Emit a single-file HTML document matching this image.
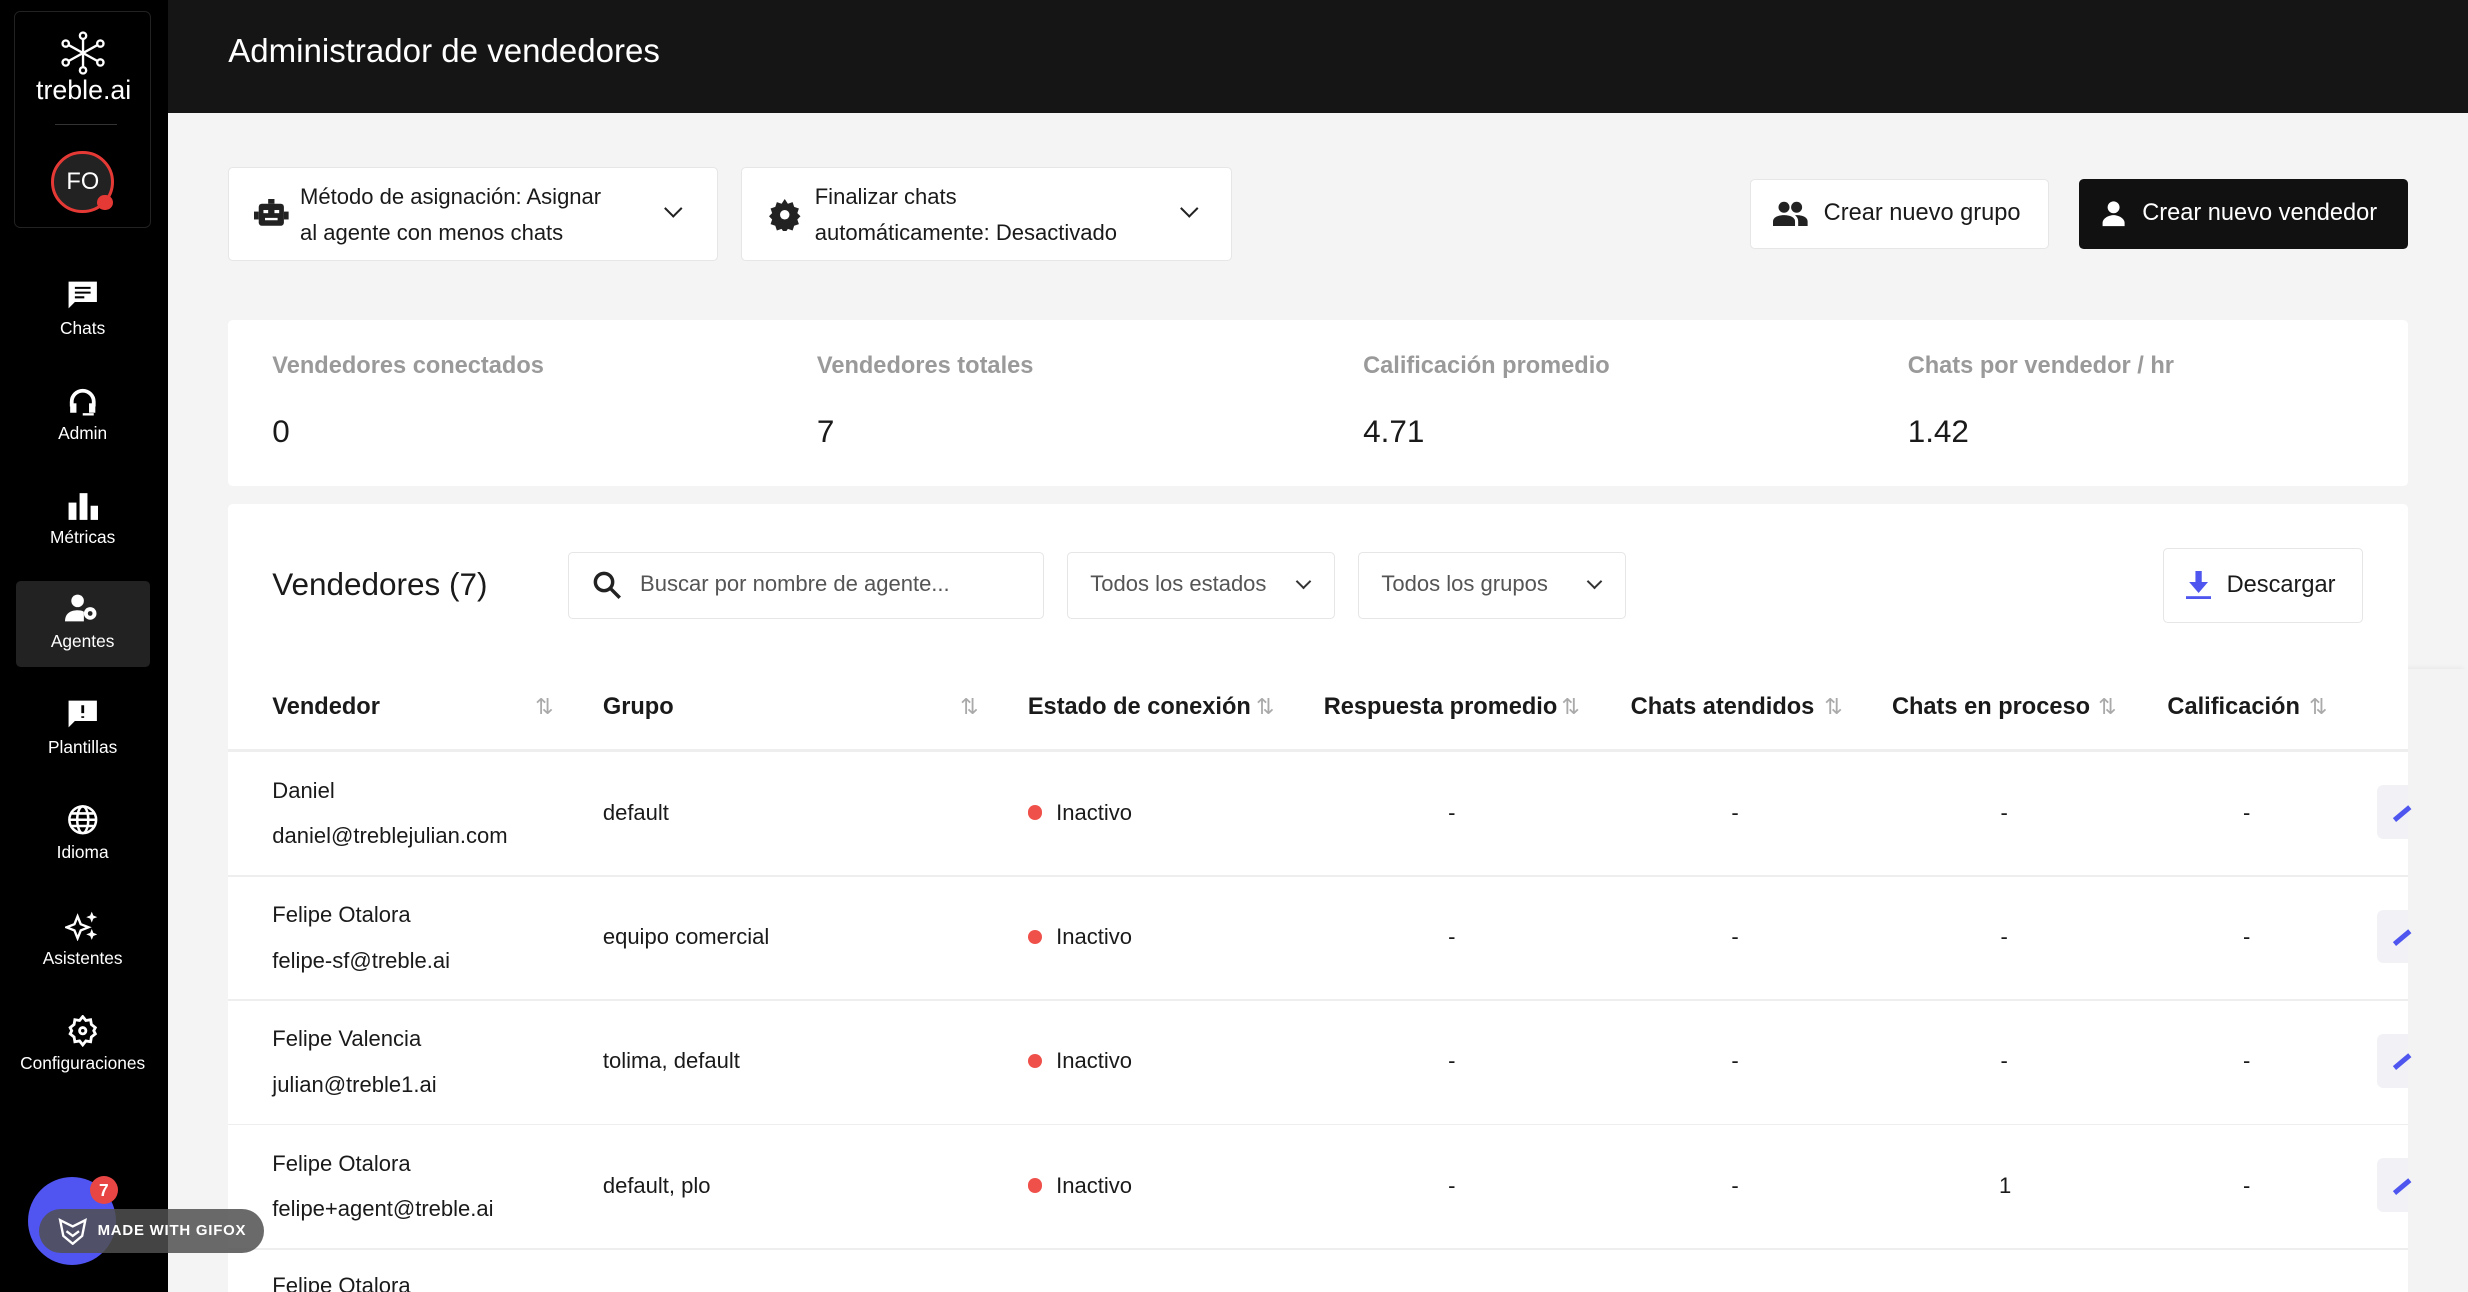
<!DOCTYPE html>
<html><head><meta charset="utf-8">
<style>
*{box-sizing:border-box;margin:0;padding:0}
html,body{width:2468px;height:1292px;overflow:hidden;background:#f4f4f4}
#w{zoom:1.574;width:1568px;height:821px;position:relative;font-family:"Liberation Sans",sans-serif;color:#1a1a1a;overflow:hidden}
.a{position:absolute}
.side{left:0;top:0;width:107px;height:821px;background:#000}
.nav{position:absolute;left:10px;width:85px;height:55px;color:#fff;font-size:11px;text-align:center;border-radius:3px}
.nav svg{display:block;margin:8px auto 4px}
.hdr{left:107px;top:0;width:1461px;height:72px;background:#151515;color:#fff;font-size:21px;padding:21px 38px}
.box{background:#fff;border:1px solid #e6e6e6;border-radius:3px}
.lbl{color:#9a9a9a;font-size:15px;font-weight:bold}
.val{font-size:20px}
.th{position:absolute;top:441px;font-size:15px;font-weight:bold}
.si{position:absolute;top:441px;color:#aaa;font-size:14px}
.cell{position:absolute;font-size:14px}
.sep{position:absolute;left:145px;width:1385px;height:1px;background:#eee}
.dot{display:inline-block;width:9px;height:9px;border-radius:50%;background:#f0504a;margin-right:9px}
.ed{position:absolute;left:1510px;width:20px;height:34px;background:#f2f2f6;border-radius:4px 0 0 4px}
.ed:after{content:"";position:absolute;left:10px;top:16px;width:13px;height:3px;background:#4f56f0;transform:rotate(-40deg)}
</style></head><body><div id="w">
<div class="a side">
 <div class="a" style="left:9px;top:7px;width:87px;height:138px;border:1px solid #222;border-radius:4px">
  <svg class="a" style="left:29px;top:12px" width="28" height="28" viewBox="0 0 28 28" fill="none" stroke="#fff" stroke-width="1.5"><circle cx="14" cy="3" r="2"/><circle cx="14" cy="25" r="2"/><circle cx="3" cy="8" r="2"/><circle cx="25" cy="8" r="2"/><circle cx="3" cy="20" r="2"/><circle cx="25" cy="20" r="2"/><path d="M14 5V23M5 9L23 19M5 19L23 9"/></svg>
  <div class="a" style="left:0;width:87px;top:40px;text-align:center;color:#fff;font-size:17px">treble.ai</div>
  <div class="a" style="left:25px;top:71px;width:40px;height:1px;background:#333"></div>
  <div class="a" style="left:23px;top:88px;width:40px;height:40px;border-radius:50%;border:2px solid #e53935;background:#222;color:#fff;font-size:15px;text-align:center;line-height:36px">FO</div>
  <div class="a" style="left:52px;top:116px;width:10px;height:10px;border-radius:50%;background:#e53935"></div>
 </div>
 <div class="nav" style="top:170px"><svg width="20" height="20" viewBox="0 0 20 20"><path d="M1 1h18v13H5l-4 4z" fill="#fff"/><path d="M5 5h10M5 8h10M5 11h6" stroke="#000" stroke-width="1.3"/></svg>Chats</div>
 <div class="nav" style="top:237px"><svg width="20" height="20" viewBox="0 0 20 20"><path d="M3 13V10a7 7 0 0114 0v3" stroke="#fff" stroke-width="2.4" fill="none"/><rect x="2" y="11" width="4" height="6" fill="#fff"/><rect x="14" y="11" width="4" height="6" fill="#fff"/><path d="M10 18h7" stroke="#fff" stroke-width="1.5"/></svg>Admin</div>
 <div class="nav" style="top:303px"><svg width="20" height="20" viewBox="0 0 20 20" fill="#fff"><rect x="1" y="8" width="5" height="11"/><rect x="8" y="2" width="5" height="17"/><rect x="15" y="10" width="5" height="9"/></svg>Métricas</div>
 <div class="nav" style="top:369px;background:#222"><svg width="22" height="20" viewBox="0 0 22 20" fill="#fff"><circle cx="8" cy="5" r="4"/><path d="M0 18c0-6 5-7 8-7s4 1 4 1v6z"/><circle cx="16" cy="13" r="4"/><circle cx="16" cy="13" r="1.5" fill="#222"/></svg>Agentes</div>
 <div class="nav" style="top:436px"><svg width="20" height="20" viewBox="0 0 20 20"><path d="M1 1h18v13H5l-4 4z" fill="#fff"/><path d="M10 4v5M10 11v1" stroke="#000" stroke-width="1.8"/></svg>Plantillas</div>
 <div class="nav" style="top:503px"><svg width="20" height="20" viewBox="0 0 20 20" fill="none" stroke="#fff" stroke-width="1.6"><circle cx="10" cy="10" r="8.5"/><ellipse cx="10" cy="10" rx="3.5" ry="8.5"/><path d="M1.5 10h17M3 6h14M3 14h14"/></svg>Idioma</div>
 <div class="nav" style="top:570px"><svg width="22" height="20" viewBox="0 0 22 20" fill="#fff"><path d="M8 4l2 5 5 2-5 2-2 5-2-5-5-2 5-2z" stroke="#fff" fill="none" stroke-width="1.5"/><path d="M17 1l1 2.5 2.5 1-2.5 1-1 2.5-1-2.5-2.5-1 2.5-1zM17 12l1 2.5 2.5 1-2.5 1-1 2.5-1-2.5-2.5-1 2.5-1z"/></svg>Asistentes</div>
 <div class="nav" style="top:637px"><svg width="20" height="20" viewBox="0 0 20 20" fill="none" stroke="#fff" stroke-width="1.8"><path d="M10 1l2 2.5 3-.5.5 3L18 8l-1 2 1 2-2.5 2-.5 3-3-.5L10 19l-2-2.5-3 .5-.5-3L2 12l1-2-1-2 2.5-2L5 3l3 .5z"/><circle cx="10" cy="10" r="2"/></svg>Configuraciones</div>
</div>
<div class="a hdr">Administrador de vendedores</div>
<div class="a" style="left:1530px;top:425px;width:38px;height:400px;background:#f3f3f3;box-shadow:-3px 0 4px rgba(0,0,0,.08)"></div>

<div class="a box" style="left:145px;top:106px;width:311px;height:60px;font-size:14px;line-height:23px;padding:7px 0 0 45px">Método de asignación: Asignar<br>al agente con menos chats
 <svg class="a" style="left:16px;top:20px" width="22" height="20" viewBox="0 0 22 20"><rect x="3" y="3" width="16" height="14" rx="2" fill="#222"/><rect x="0" y="8" width="3" height="5" fill="#222"/><rect x="19" y="8" width="3" height="5" fill="#222"/><rect x="9" y="0" width="4" height="3" fill="#222"/><rect x="6" y="7" width="3" height="2" fill="#fff"/><rect x="13" y="7" width="3" height="2" fill="#fff"/><rect x="7" y="12" width="8" height="1.5" fill="#fff"/></svg>
 <div class="a" style="left:278px;top:22px;width:8px;height:8px;border-right:1.5px solid #222;border-bottom:1.5px solid #222;transform:rotate(45deg)"></div></div>
<div class="a box" style="left:471px;top:106px;width:312px;height:60px;font-size:14px;line-height:23px;padding:7px 0 0 46px">Finalizar chats<br>automáticamente: Desactivado
 <svg class="a" style="left:17px;top:20px" width="20" height="20" viewBox="0 0 20 20"><path d="M10 0l2 3 3-1 1 3 3 1-1 3 2 2-2 2 1 3-3 1-1 3-3-1-2 3-2-3-3 1-1-3-3-1 1-3-2-2 2-2-1-3 3-1 1-3 3 1z" fill="#222"/><circle cx="10" cy="10" r="3" fill="#fff"/></svg>
 <div class="a" style="left:280px;top:22px;width:8px;height:8px;border-right:1.5px solid #222;border-bottom:1.5px solid #222;transform:rotate(45deg)"></div></div>
<div class="a box" style="left:1112px;top:114px;width:190px;height:44px;font-size:15px;line-height:42px;padding-left:46px">Crear nuevo grupo
 <svg class="a" style="left:14px;top:13px" width="22" height="16" viewBox="0 0 22 16" fill="#222"><circle cx="7" cy="4" r="3.5"/><circle cx="15" cy="4" r="3.5"/><path d="M0 16v-3c0-3 4-4 7-4s7 1 7 4v3z"/><path d="M15 9c3 0 7 1 7 4v3h-6v-3c0-2-1-3-2-4z"/></svg></div>
<div class="a" style="left:1321px;top:114px;width:209px;height:44px;background:#111;border-radius:3px;color:#fff;font-size:15px;line-height:44px;padding-left:40px">Crear nuevo vendedor
 <svg class="a" style="left:14px;top:14px" width="16" height="16" viewBox="0 0 16 16" fill="#fff"><circle cx="8" cy="4" r="3.8"/><path d="M1 16v-2c0-3 4-5 7-5s7 2 7 5v2z"/></svg></div>

<div class="a" style="left:145px;top:203px;width:1385px;height:106px;background:#fff;border-radius:3px"></div>
<div class="a lbl" style="left:173px;top:224px">Vendedores conectados</div><div class="a val" style="left:173px;top:263px">0</div>
<div class="a lbl" style="left:519px;top:224px">Vendedores totales</div><div class="a val" style="left:519px;top:263px">7</div>
<div class="a lbl" style="left:866px;top:224px">Calificación promedio</div><div class="a val" style="left:866px;top:263px">4.71</div>
<div class="a lbl" style="left:1212px;top:224px">Chats por vendedor / hr</div><div class="a val" style="left:1212px;top:263px">1.42</div>

<div class="a" style="left:145px;top:320px;width:1385px;height:510px;background:#fff;border-radius:3px"></div>
<div class="a" style="left:173px;top:360px;font-size:20px">Vendedores (7)</div>
<div class="a box" style="left:361px;top:351px;width:302px;height:42px;font-size:14px;color:#555;line-height:40px;padding-left:45px">Buscar por nombre de agente...
 <svg class="a" style="left:15px;top:11px" width="18" height="18" viewBox="0 0 18 18" fill="none" stroke="#222" stroke-width="2.2"><circle cx="7" cy="7" r="5.5"/><path d="M11 11l6 6"/></svg></div>
<div class="a box" style="left:678px;top:351px;width:170px;height:42px;font-size:14px;color:#555;line-height:40px;padding-left:14px">Todos los estados<div class="a" style="left:146px;top:14px;width:7px;height:7px;border-right:1.5px solid #333;border-bottom:1.5px solid #333;transform:rotate(45deg)"></div></div>
<div class="a box" style="left:863px;top:351px;width:170px;height:42px;font-size:14px;color:#555;line-height:40px;padding-left:14px">Todos los grupos<div class="a" style="left:146px;top:14px;width:7px;height:7px;border-right:1.5px solid #333;border-bottom:1.5px solid #333;transform:rotate(45deg)"></div></div>
<div class="a box" style="left:1374px;top:348px;width:127px;height:48px;font-size:15px;line-height:46px;padding-left:40px">Descargar
 <svg class="a" style="left:14px;top:14px" width="16" height="18" viewBox="0 0 16 18" fill="#4f56f0"><path d="M6 0h4v7h4l-6 7-6-7h4z"/><rect x="0" y="16" width="16" height="2"/></svg></div>

<div class="th" style="left:173px">Vendedor</div><div class="si" style="left:340px">⇅</div>
<div class="th" style="left:383px">Grupo</div><div class="si" style="left:610px">⇅</div>
<div class="th" style="left:653px">Estado de conexión</div><div class="si" style="left:798px">⇅</div>
<div class="th" style="left:841px">Respuesta promedio</div><div class="si" style="left:992px">⇅</div>
<div class="th" style="left:1036px">Chats atendidos</div><div class="si" style="left:1159px">⇅</div>
<div class="th" style="left:1202px">Chats en proceso</div><div class="si" style="left:1333px">⇅</div>
<div class="th" style="left:1377px">Calificación</div><div class="si" style="left:1467px">⇅</div>
<div class="sep" style="top:476px;height:2px"></div>

<div class="cell" style="left:173px;top:494px">Daniel</div><div class="cell" style="left:173px;top:523px">daniel@treblejulian.com</div>
<div class="cell" style="left:383px;top:508px">default</div><div class="cell" style="left:653px;top:508px"><span class="dot"></span>Inactivo</div>
<div class="cell" style="left:920px;top:508px">-</div><div class="cell" style="left:1100px;top:508px">-</div><div class="cell" style="left:1271px;top:508px">-</div><div class="cell" style="left:1425px;top:508px">-</div>
<div class="ed" style="top:499px"></div><div class="sep" style="top:556px"></div>

<div class="cell" style="left:173px;top:573px">Felipe Otalora</div><div class="cell" style="left:173px;top:602px">felipe-sf@treble.ai</div>
<div class="cell" style="left:383px;top:587px">equipo comercial</div><div class="cell" style="left:653px;top:587px"><span class="dot"></span>Inactivo</div>
<div class="cell" style="left:920px;top:587px">-</div><div class="cell" style="left:1100px;top:587px">-</div><div class="cell" style="left:1271px;top:587px">-</div><div class="cell" style="left:1425px;top:587px">-</div>
<div class="ed" style="top:578px"></div><div class="sep" style="top:635px"></div>

<div class="cell" style="left:173px;top:652px">Felipe Valencia</div><div class="cell" style="left:173px;top:681px">julian@treble1.ai</div>
<div class="cell" style="left:383px;top:666px">tolima, default</div><div class="cell" style="left:653px;top:666px"><span class="dot"></span>Inactivo</div>
<div class="cell" style="left:920px;top:666px">-</div><div class="cell" style="left:1100px;top:666px">-</div><div class="cell" style="left:1271px;top:666px">-</div><div class="cell" style="left:1425px;top:666px">-</div>
<div class="ed" style="top:657px"></div><div class="sep" style="top:714px"></div>

<div class="cell" style="left:173px;top:731px">Felipe Otalora</div><div class="cell" style="left:173px;top:760px">felipe+agent@treble.ai</div>
<div class="cell" style="left:383px;top:745px">default, plo</div><div class="cell" style="left:653px;top:745px"><span class="dot"></span>Inactivo</div>
<div class="cell" style="left:920px;top:745px">-</div><div class="cell" style="left:1100px;top:745px">-</div><div class="cell" style="left:1270px;top:745px">1</div><div class="cell" style="left:1425px;top:745px">-</div>
<div class="ed" style="top:736px"></div><div class="sep" style="top:793px"></div>
<div class="cell" style="left:173px;top:809px">Felipe Otalora</div>

<div class="a" style="left:18px;top:748px;width:56px;height:56px;border-radius:50%;background:#5054f0"></div>
<div class="a" style="left:57px;top:747px;width:18px;height:18px;border-radius:50%;background:#e84545;color:#fff;font-size:11px;font-weight:bold;text-align:center;line-height:18px">7</div>
<div class="a" style="left:25px;top:768px;width:143px;height:28px;border-radius:14px;background:rgba(80,80,80,.85);color:#fff;font-size:9.5px;font-weight:bold;letter-spacing:.5px;line-height:28px;padding-left:37px">MADE WITH GIFOX
 <svg class="a" style="left:11px;top:5px" width="20" height="18" viewBox="0 0 20 18" fill="none" stroke="#fff" stroke-width="1.5"><path d="M2 2l8 4 8-4-2 10-6 5-6-5z"/><path d="M6 9l4 3 4-3"/></svg></div>
</div></body></html>
